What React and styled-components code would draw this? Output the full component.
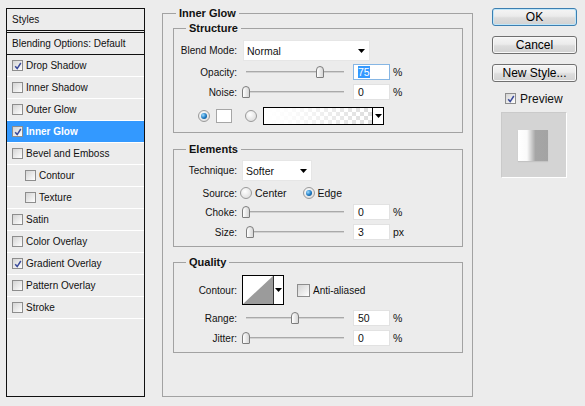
import React from "react";
import styled, { createGlobalStyle } from "styled-components";

const GlobalStyle = createGlobalStyle`
  html, body { margin: 0; padding: 0; background: #ececec; }
  body {
    font-family: "Liberation Sans", Arial, sans-serif;
    font-size: 10px;
    color: #111;
  }
`;

const Page = styled.div`
  display: flex;
  align-items: flex-start;
  width: 585px;
  height: 406px;
  padding-left: 6px;
  box-sizing: border-box;
  background: #ececec;
  overflow: hidden;
`;

/* ---------- left styles list ---------- */
const StylesPanel = styled.div`
  margin-top: 8px;
  width: 139px;
  height: 389px;
  box-sizing: border-box;
  border: 1px solid #111;
  display: flex;
  flex-direction: column;
`;
const PanelHeader = styled.div`
  height: 21px;
  display: flex;
  align-items: center;
  padding-left: 5px;
  border-bottom: 1px solid #111;
`;
const BlendRow = styled.div`
  margin-top: 1px;
  height: 21px;
  display: flex;
  align-items: center;
  padding-left: 5px;
  border-top: 1px solid #111;
  border-bottom: 1px solid #111;
`;
const Item = styled.div`
  height: 21px;
  display: flex;
  align-items: center;
  gap: 3px;
  padding-left: ${(p) => (p.$sub ? 18 : 5)}px;
  border-bottom: 1px solid #fff;
  background: ${(p) => (p.$selected ? "#3399ff" : "transparent")};
  color: ${(p) => (p.$selected ? "#fff" : "#111")};
  font-weight: ${(p) => (p.$selected ? "bold" : "normal")};
`;

const Box = styled.span`
  width: ${(p) => p.$size}px;
  height: ${(p) => p.$size}px;
  box-sizing: border-box;
  border: 1px solid #8d8d8d;
  background: linear-gradient(135deg, #d4d4d4 0%, #efefef 65%, #fff 100%);
  display: inline-flex;
  align-items: center;
  justify-content: center;
  flex: none;
  margin-left: ${(p) => p.$ml || 0}px;
`;

function Check({ checked, size = 11, ml }) {
  return (
    <Box $size={size} $ml={ml}>
      {checked && (
        <svg width={size - 3} height={size - 3} viewBox="0 0 8 8">
          <path d="M1.2 4.2 L3.2 6.6 L6.8 1" fill="none" stroke="#3a4a9a" strokeWidth="1.5" />
        </svg>
      )}
    </Box>
  );
}

const STYLE_ITEMS = [
  { name: "Drop Shadow", checked: true },
  { name: "Inner Shadow" },
  { name: "Outer Glow" },
  { name: "Inner Glow", checked: true, selected: true },
  { name: "Bevel and Emboss" },
  { name: "Contour", sub: true },
  { name: "Texture", sub: true },
  { name: "Satin" },
  { name: "Color Overlay" },
  { name: "Gradient Overlay", checked: true },
  { name: "Pattern Overlay" },
  { name: "Stroke" },
];

/* ---------- group boxes ---------- */
const Group = styled.fieldset`
  margin: ${(p) => p.$mt || 0}px 0 0 ${(p) => p.$ml || 0}px;
  padding: 0;
  border: 1px solid #a2a2a2;
  min-width: 0;
  box-sizing: border-box;
  width: ${(p) => p.$w}px;
  ${(p) => (p.$h ? `height: ${p.$h}px;` : "")}
`;
const Legend = styled.legend`
  margin-left: ${(p) => p.$ml}px;
  padding: 0 3px;
  font-weight: bold;
  font-size: 11px;
  line-height: 13px;
  color: #111;
`;
const GroupBody = styled.div`
  display: flex;
  flex-direction: column;
  padding: ${(p) => p.$pad};
`;

const Row = styled.div`
  display: flex;
  align-items: center;
  height: ${(p) => p.$h || 16}px;
  margin-top: ${(p) => p.$mt || 0}px;
  padding-left: ${(p) => p.$pl || 0}px;
`;
const Label = styled.span`
  width: 63px;
  flex: none;
  text-align: right;
  margin-right: ${(p) => (p.$gap === undefined ? 6 : p.$gap)}px;
  white-space: nowrap;
`;

const Select = styled.div`
  width: ${(p) => p.$w}px;
  height: 21px;
  box-sizing: border-box;
  background: #fff;
  border: 1px solid #e6e6e6;
  display: flex;
  align-items: center;
  justify-content: space-between;
  padding: 0 4px 0 3px;
  font-size: 10.5px;
  flex: none;
`;

const Arrow = () => (
  <svg width="7" height="4" viewBox="0 0 7 4">
    <path d="M0 0H7L3.5 4Z" fill="#000" />
  </svg>
);

const Slider = styled.div`
  position: relative;
  width: 104px;
  height: 16px;
  flex: none;
`;
const Track = styled.div`
  position: absolute;
  left: 3px;
  right: 3px;
  top: 7px;
  height: 1px;
  background: #d2d2d2;
  border-top: 1px solid #a9a9a9;
`;
const Thumb = styled.div`
  position: absolute;
  top: 2px;
  width: 8px;
  height: 12px;
  box-sizing: border-box;
  border: 1px solid #7d7d7d;
  border-radius: 4px 4px 1px 1px;
  background: linear-gradient(to right, #ffffff, #d6d6d6);
`;

const NumBox = styled.div`
  width: 37px;
  height: 16px;
  box-sizing: border-box;
  margin-left: 6px;
  background: #fff;
  border: 1px solid ${(p) => (p.$focus ? "#86b6e4" : "#e2e2e2")};
  padding-left: 4px;
  line-height: 14px;
  font-size: 10.5px;
  color: #111;
  flex: none;
`;
const Sel = styled.span`
  background: #3399ff;
  color: #fff;
`;
const Unit = styled.span`
  margin-left: 3px;
  font-size: 10.5px;
`;

// pos is the thumb position along the track (0-100), value is what the box shows
function SliderRow({ label, value, pos = value, unit = "%", mt, focus }) {
  return (
    <Row $mt={mt}>
      <Label>{label}</Label>
      <Slider>
        <Track />
        <Thumb style={{ left: -1 + pos * 0.98 }} />
      </Slider>
      <NumBox $focus={focus}>{focus ? <Sel>{value}</Sel> : value}</NumBox>
      <Unit>{unit}</Unit>
    </Row>
  );
}

const RadioDot = styled.span`
  width: 12px;
  height: 12px;
  border-radius: 50%;
  box-sizing: border-box;
  border: 1px solid #9a9a9a;
  background: radial-gradient(circle at 40% 35%, #ffffff, #d6d6d6);
  display: inline-flex;
  align-items: center;
  justify-content: center;
  flex: none;
  margin-left: ${(p) => p.$ml || 0}px;
  &::after {
    content: "";
    display: ${(p) => (p.$on ? "block" : "none")};
    width: 6px;
    height: 6px;
    border-radius: 50%;
    background: radial-gradient(circle at 35% 35%, #9fdcff, #1a78c2 55%, #0b3f70);
  }
`;

const Swatch = styled.span`
  width: 16px;
  height: 14px;
  box-sizing: border-box;
  background: #fff;
  border: 1px solid #a6a6a6;
  margin-left: 6px;
  flex: none;
`;
const GradientField = styled.div`
  width: 121px;
  height: 18px;
  box-sizing: border-box;
  border: 1px solid #000;
  display: flex;
  margin-left: 6px;
  flex: none;
`;
const GradientFill = styled.div`
  flex: 1;
  background:
    linear-gradient(to right, #fff 0%, rgba(255, 255, 255, 0.9) 25%, rgba(255, 255, 255, 0.1) 100%),
    repeating-conic-gradient(#d9d9d9 0 25%, #fff 0 50%) 0 0 / 8px 8px;
`;
const DropPart = styled.div`
  width: 10px;
  border-left: 1px solid #000;
  background: #fff;
  display: flex;
  align-items: center;
  justify-content: center;
`;

const RadioText = styled.span`
  margin-left: 3px;
  font-size: 10.5px;
`;

const ContourBox = styled.div`
  width: 42px;
  height: 30px;
  box-sizing: border-box;
  border: 1px solid #000;
  display: flex;
  flex: none;
`;
const ContourMenu = styled.div`
  flex: 1;
  border-left: 1px solid #333;
  background: #fff;
  display: flex;
  align-items: center;
  justify-content: center;
`;
const CheckText = styled.span`
  margin-left: 3px;
`;

/* ---------- right column ---------- */
const Side = styled.div`
  margin-left: 19px;
  margin-top: 8px;
  width: 85px;
  display: flex;
  flex-direction: column;
`;
const Button = styled.button`
  width: 85px;
  height: 18px;
  margin-top: ${(p) => p.$mt || 0}px;
  padding: 0;
  border: 1px solid ${(p) => (p.$default ? "#3c7fb1" : "#707070")};
  border-radius: 3px;
  background: linear-gradient(#f5f5f5, #ebebeb 45%, #dddddd 55%, #d1d1d1);
  box-shadow: ${(p) => (p.$default ? "inset 0 0 0 1px #bfe6f9" : "inset 0 0 0 1px #f8f8f8")};
  font-family: "Liberation Sans", Arial, sans-serif;
  font-size: 12px;
  line-height: 16px;
  color: #000;
`;
const PreviewRow = styled.div`
  margin-top: 11px;
  padding-left: 13px;
  height: 11px;
  display: flex;
  align-items: center;
  gap: 4px;
  font-size: 12px;
`;
const PreviewBox = styled.div`
  margin: 8px 0 0 9px;
  width: 66px;
  height: 66px;
  box-sizing: border-box;
  background: #d4d4d4;
  border: 1px solid;
  border-color: #cacaca #fff #fff #cacaca;
  padding: 17px 0 0 16px;
`;
const PreviewSample = styled.div`
  width: 30px;
  height: 31px;
  background: linear-gradient(to right, #fff 0%, #fafafa 30%, #c4c4c4 48%, #a6a6a6 58%, #a3a3a3 100%);
  box-shadow: 0 1px 1px rgba(0, 0, 0, 0.08);
`;

export default function App() {
  return (
    <Page>
      <GlobalStyle />
      <StylesPanel>
        <PanelHeader>Styles</PanelHeader>
        <BlendRow>Blending Options: Default</BlendRow>
        {STYLE_ITEMS.map((it) => (
          <Item key={it.name} $sub={it.sub} $selected={it.selected}>
            <Check checked={it.checked} />
            {it.name}
          </Item>
        ))}
      </StylesPanel>

      <Group $w={311} $h={390} $ml={17} $mt={7}>
        <Legend $ml={13}>Inner Glow</Legend>
        <GroupBody $pad="2px 9px 0 10px">
          <Group $w={290}>
            <Legend $ml={12}>Structure</Legend>
            <GroupBody $pad="5px 0 7px 0">
              <Row $h={21}>
                <Label>Blend Mode:</Label>
                <Select $w={127}>
                  Normal
                  <Arrow />
                </Select>
              </Row>
              <SliderRow label="Opacity:" value={75} mt={3} focus />
              <SliderRow label="Noise:" value={0} mt={4} />
              <Row $h={18} $mt={7} $pl={24}>
                <RadioDot $on />
                <Swatch />
                <RadioDot $ml={13} />
                <GradientField>
                  <GradientFill />
                  <DropPart>
                    <Arrow />
                  </DropPart>
                </GradientField>
              </Row>
            </GroupBody>
          </Group>

          <Group $w={290} $mt={10}>
            <Legend $ml={12}>Elements</Legend>
            <GroupBody $pad="4px 0 6px 0">
              <Row $h={21}>
                <Label $gap={5}>Technique:</Label>
                <Select $w={70}>
                  Softer
                  <Arrow />
                </Select>
              </Row>
              <Row $h={12} $mt={6}>
                <Label $gap={3}>Source:</Label>
                <RadioDot />
                <RadioText>Center</RadioText>
                <RadioDot $on $ml={16} />
                <RadioText>Edge</RadioText>
              </Row>
              <SliderRow label="Choke:" value={0} mt={5} />
              <SliderRow label="Size:" value={3} pos={4} unit="px" mt={4} />
            </GroupBody>
          </Group>

          <Group $w={290} $mt={9}>
            <Legend $ml={12}>Quality</Legend>
            <GroupBody $pad="6px 0 6px 0">
              <Row $h={30}>
                <Label $gap={5}>Contour:</Label>
                <ContourBox>
                  <svg width="30" height="28" viewBox="0 0 30 28">
                    <rect width="30" height="28" fill="#fff" />
                    <path d="M0 28 L30 0 L30 28 Z" fill="#9b9b9b" />
                  </svg>
                  <ContourMenu>
                    <Arrow />
                  </ContourMenu>
                </ContourBox>
                <Check size={13} ml={13} />
                <CheckText>Anti-aliased</CheckText>
              </Row>
              <SliderRow label="Range:" value={50} mt={5} />
              <SliderRow label="Jitter:" value={0} mt={4} />
            </GroupBody>
          </Group>
        </GroupBody>
      </Group>

      <Side>
        <Button $default>OK</Button>
        <Button $mt={10}>Cancel</Button>
        <Button $mt={10}>New Style...</Button>
        <PreviewRow>
          <Check checked />
          Preview
        </PreviewRow>
        <PreviewBox>
          <PreviewSample />
        </PreviewBox>
      </Side>
    </Page>
  );
}
